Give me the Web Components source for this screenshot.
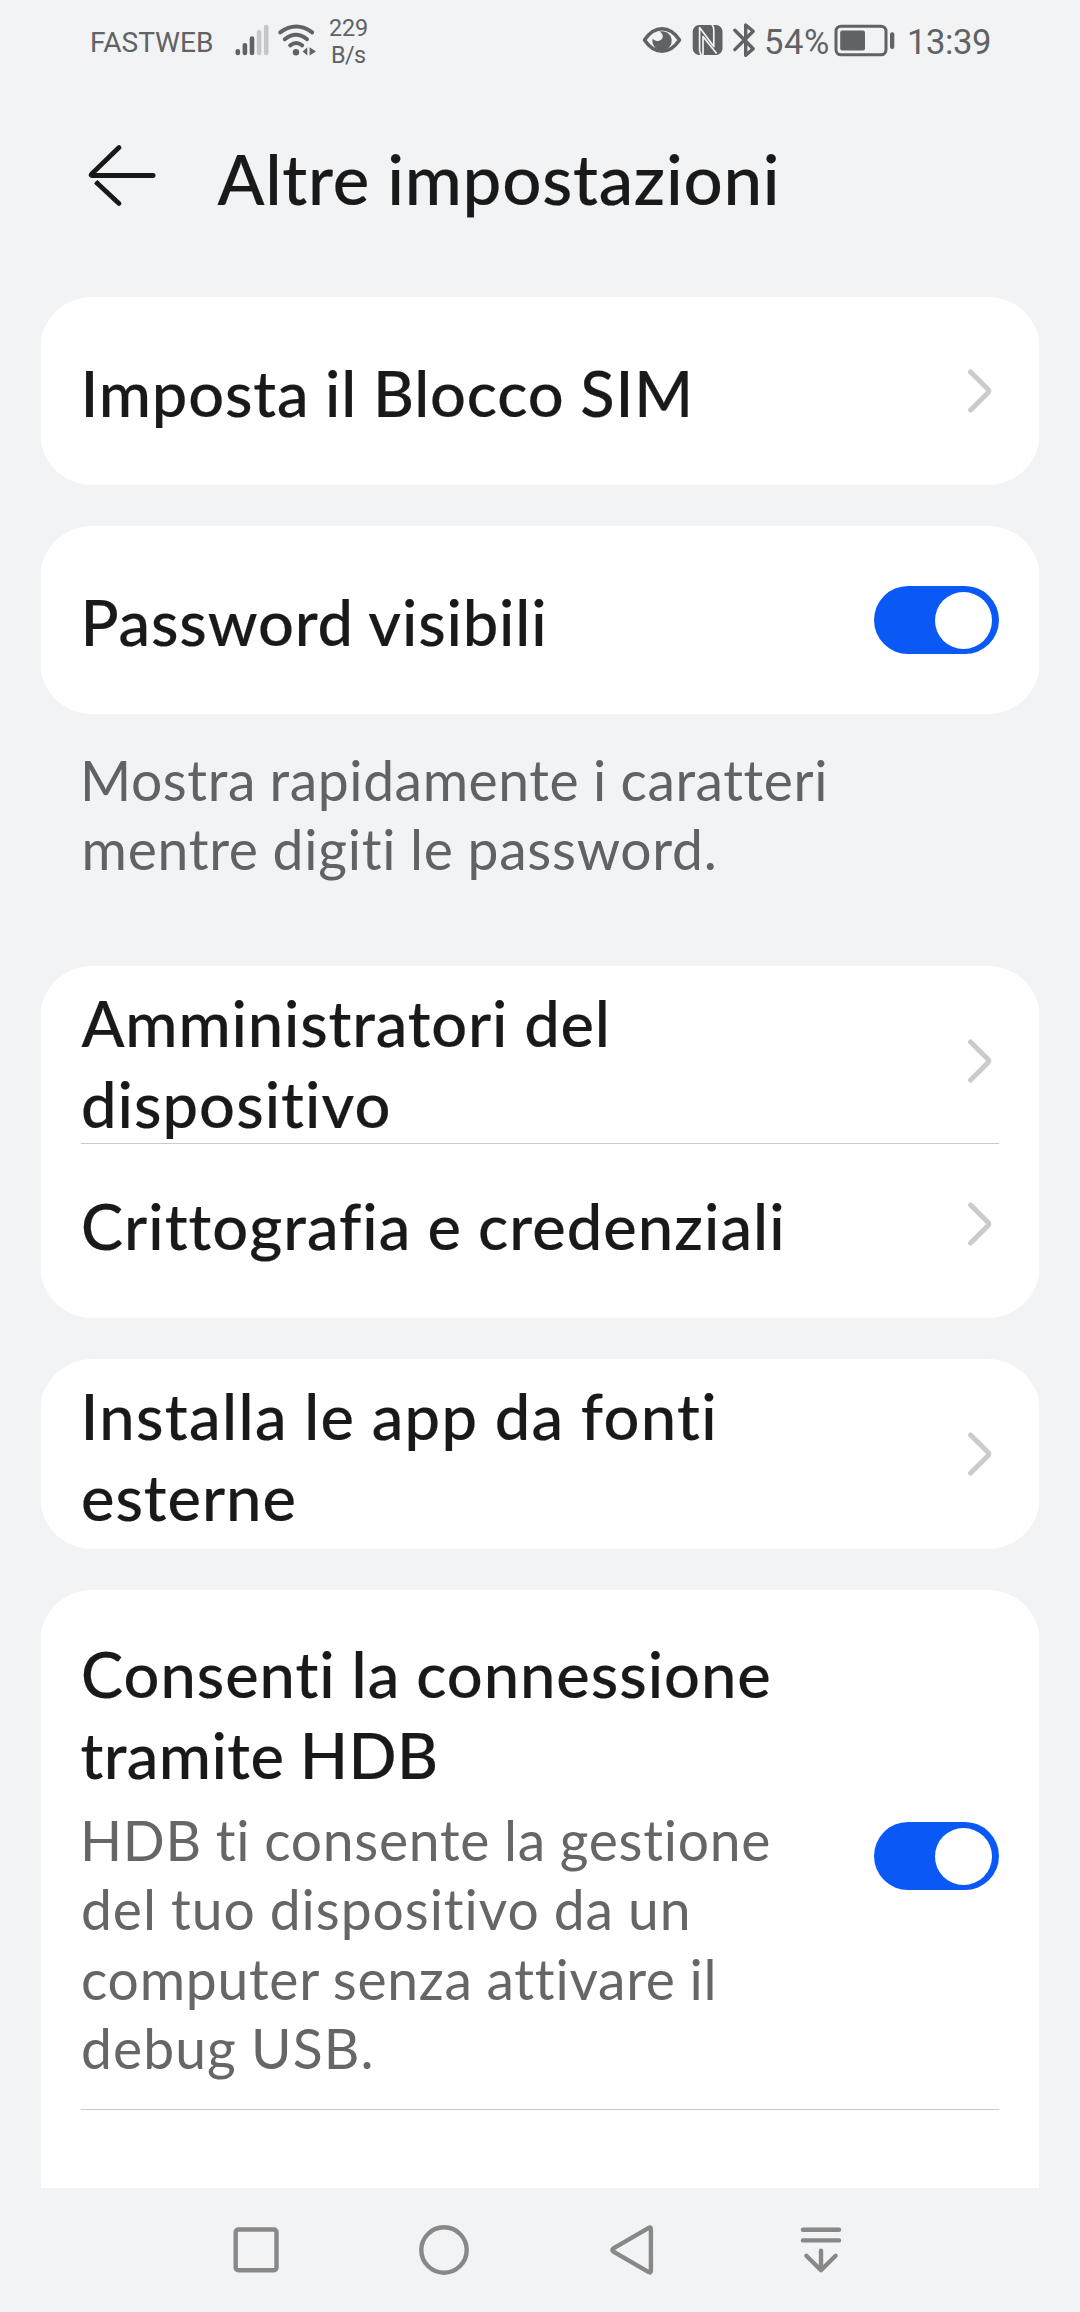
<!DOCTYPE html>
<html lang="it">
<head>
<meta charset="utf-8">
<title>Altre impostazioni</title>
<style>
html,body{margin:0;background:#f1f3f5}
body{width:1080px;height:2312px;overflow:hidden}
</style>
</head>
<body>
<phone-screen>
  <status-bar slot="status"></status-bar>
  <page-header slot="header"><text-line kind="heading" w="559.5">Altre impostazioni</text-line></page-header>

  <setting-card style="height:188px">
    <setting-row style="--h:188px;--tp:55px;--ap:71.5px">
      <text-line kind="title" x="4.5" w="603">Imposta il Blocco SIM</text-line>
      <chevron-icon slot="end"></chevron-icon>
    </setting-row>
  </setting-card>

  <setting-card style="height:188px;margin-top:41px">
    <setting-row style="--h:188px;--tp:55px;--ap:60px">
      <text-line kind="title" x="4.5" w="459.5">Password visibili</text-line>
      <toggle-switch slot="end"></toggle-switch>
    </setting-row>
  </setting-card>

  <card-note>
    <text-line kind="desc" x="4" w="740.5">Mostra rapidamente i caratteri</text-line>
    <text-line kind="desc" x="3.5" w="629.5">mentre digiti le password.</text-line>
  </card-note>

  <setting-card style="height:352px">
    <setting-row divider style="--h:178px;--tp:16px;--ap:72.5px">
      <text-line kind="title" x="0.5" w="524.5">Amministratori del</text-line>
      <text-line kind="title" x="2" w="305.5">dispositivo</text-line>
      <chevron-icon slot="end"></chevron-icon>
    </setting-row>
    <setting-row style="--h:174px;--tp:41px;--ap:57.5px">
      <text-line kind="title" x="2" w="698.5">Crittografia e credenziali</text-line>
      <chevron-icon slot="end"></chevron-icon>
    </setting-row>
  </setting-card>

  <setting-card style="height:190px;margin-top:41px">
    <setting-row style="--h:190px;--tp:16px;--ap:72.5px">
      <text-line kind="title" x="4.5" w="628">Installa le app da fonti</text-line>
      <text-line kind="title" x="2" w="211.5">esterne</text-line>
      <chevron-icon slot="end"></chevron-icon>
    </setting-row>
  </setting-card>

  <setting-card open-end style="height:598px;margin-top:41px">
    <setting-row divider style="--h:520px;--tp:43px;--ap:232px">
      <text-line kind="title" x="2" w="686.5">Consenti la connessione</text-line>
      <text-line kind="title" x="0.5" w="353.5">tramite HDB</text-line>
      <text-line kind="desc" x="4" w="684.5" style="margin-top:11px">HDB ti consente la gestione</text-line>
      <text-line kind="desc" x="2" w="605">del tuo dispositivo da un</text-line>
      <text-line kind="desc" x="2" w="631">computer senza attivare il</text-line>
      <text-line kind="desc" x="2" w="287.5">debug USB.</text-line>
      <toggle-switch slot="end"></toggle-switch>
    </setting-row>
  </setting-card>

  <nav-bar slot="nav"></nav-bar>
</phone-screen>

<script>
const define = (name, html) => customElements.define(name, class extends HTMLElement {
  constructor() {
    super();
    const t = document.createElement('template');
    t.innerHTML = html;
    this.attachShadow({ mode: 'open' }).append(t.content.cloneNode(true));
  }
});

define('phone-screen', `<style>
:host{display:flex;flex-direction:column;width:1080px;height:2312px;background:#f1f3f5;overflow:hidden}
main{display:flex;flex-direction:column;height:1891px;padding:0 40px}
</style><slot name="status"></slot><slot name="header"></slot><main><slot></slot></main><slot name="nav"></slot>`);

define('page-header', `<style>
:host{display:flex;height:217px;align-items:flex-start;box-sizing:border-box;padding-left:86px}
svg{margin:60px 58.5px 0 0;flex:none}
div{padding-top:59px}
</style><svg width="73" height="70" viewBox="86 140 73 70" fill="none" stroke="#191919" stroke-width="4.8" stroke-linecap="round" stroke-linejoin="round"><path d="M119 147.6 91.6 174Q90.3 175.5 92 175.5H153.2M119 203.4 97.3 183.2"/><path d="M97.8 183.7 95.8 181.8" stroke-linecap="butt"/></svg><div><slot></slot></div>`);

define('setting-card', `<style>
:host{display:flex;flex-direction:column;flex:none;background:#fff;border-radius:52px;clip-path:inset(0 1px);box-sizing:border-box}
:host([open-end]){border-radius:52px 52px 0 0}
</style><slot></slot>`);

define('setting-row', `<style>
:host{display:flex;justify-content:space-between;align-items:flex-start;height:var(--h);margin:0 41px;box-sizing:border-box;border-bottom:0 solid #c9c9c9}
:host([divider]){border-bottom-width:1px}
.copy{display:flex;flex-direction:column;padding-top:var(--tp)}
.end{display:flex;padding-top:var(--ap)}
</style><div class="copy"><slot></slot></div><div class="end"><slot name="end"></slot></div>`);

define('card-note', `<style>
:host{display:flex;flex-direction:column;flex:none;height:252px;box-sizing:border-box;padding:32px 41px 0;--desc:#616263}
</style><slot></slot>`);

define('chevron-icon', `<style>:host{display:block;width:33px;height:44px}svg{display:block}</style>
<svg width="33" height="44" viewBox="966 0 33 44" fill="none" stroke="#cbcbcb" stroke-width="5" stroke-linecap="round" stroke-linejoin="round"><path d="M970.6 2.9 988.2 20.5Q989.4 22 988.2 23.5L970.6 41.1"/></svg>`);

define('toggle-switch', `<style>
:host{display:flex;justify-content:flex-end;align-items:center;width:125px;height:68px;border-radius:34px;background:#0a59f7;box-sizing:border-box;padding-right:7px;margin-right:-.4px}
i{display:block;width:57px;height:57px;border-radius:50%;background:#fff}
</style><i></i>`);

define('status-bar', `<style>
:host{display:flex;justify-content:space-between;height:80px;flex:none;box-sizing:border-box;padding:0 90px 0 92px}
div{display:flex}
svg{display:block;flex:none}
.rate{flex-direction:column;padding-top:14.5px}
</style>
<div>
<text-line kind="carrier" w="120" style="margin-top:22.5px">FASTWEB</text-line>
<svg style="margin-left:22px" width="38" height="80" viewBox="234 0 38 80" fill="none" stroke="#616263" stroke-width="4.6" stroke-linecap="round"><path d="M237.8 51.3V53M244.9 45.3V53M252 38.5V53"/><path stroke="#c5c7c8" d="M259.1 32.3V53M266.2 27V53"/></svg>
<svg style="margin-left:4px" width="42" height="80" viewBox="276 0 42 80" fill="none" stroke="#616263" stroke-width="4" stroke-linecap="round"><path d="M280.2 32.4Q296.2 20.6 312.2 32.4M284.8 39.2Q296 30.4 307 39.2M290.2 45.3Q296.2 40.8 302.2 45.3"/><circle cx="296" cy="52.2" r="3.2" fill="#616263" stroke="none"/><path fill="#616263" stroke="none" d="M302.6 51.6 307.3 47.3V55.4ZM309.6 47.3 316 51.4 309.6 55.4Z"/></svg>
<div class="rate" style="margin-left:12px"><text-line kind="rate" w="37">229</text-line><text-line kind="rate" x="2" w="33">B/s</text-line></div>
</div>
<div>
<svg width="42" height="80" viewBox="641 0 42 80"><path d="M644.5 40Q652 28.8 662 28.8T679.5 40Q672 51.2 662 51.2T644.5 40Z" fill="none" stroke="#616263" stroke-width="3.5" stroke-linejoin="round"/><path d="M659.5 31.5A9.6 9.6 0 1 1 652.7 38.5C655 42.5 662.5 41.5 662.8 36.5C662.8 34.3 661.5 32.5 659.5 31.5Z" fill="#616263"/></svg>
<svg style="margin-left:9px" width="32" height="80" viewBox="692 0 32 80"><rect x="692.7" y="25" width="29.8" height="30" rx="6.5" fill="#616263"/><path fill="none" stroke="#f1f3f5" stroke-width="1.7" stroke-linejoin="round" d="M701.4 55.5 699.6 51V27.5L713.8 46.5V30Q713.8 26.5 711.8 24.5M703 55.5V36.5L716.6 53.5"/></svg>
<svg style="margin-left:8px" width="26" height="80" viewBox="732 0 26 80" fill="none" stroke="#616263" stroke-width="3.4" stroke-linecap="round" stroke-linejoin="round"><path d="M734.8 30.2 753.2 48.8 745.7 55.3V25L753.2 31.2 734.8 49.6"/></svg>
<text-line kind="clock" w="62" style="margin:22px 0 0 8px">54%</text-line>
<svg style="margin-left:5px" width="64" height="80" viewBox="833 0 64 80"><rect x="836" y="26.2" width="50" height="28.6" rx="5" fill="none" stroke="#616263" stroke-width="3"/><rect x="840.2" y="30.5" width="24.8" height="20" rx="2" fill="#616263"/><rect x="890" y="32.2" width="4.3" height="16.8" rx="2" fill="#616263"/></svg>
<text-line kind="clock" w="81" style="margin:22px 0 0 12px">13:39</text-line>
</div>`);

define('nav-bar', `<style>
:host{display:flex;height:124px;flex:none;box-sizing:border-box;padding:35px 0 0 231px;gap:136px}
svg{display:block;flex:none;fill:none;stroke:#888;stroke-width:4.4;stroke-linecap:round;stroke-linejoin:round}
svg:last-of-type{margin-left:6px}
</style>
<svg width="50" height="54" viewBox="231 2223 50 54"><rect x="235.7" y="2229.5" width="40.8" height="40.8" rx="2.5"/></svg>
<svg width="54" height="54" viewBox="417 2223 54 54"><circle cx="444" cy="2250" r="22.7"/></svg>
<svg width="48" height="54" viewBox="607 2223 48 54"><path d="M650.9 2229.3V2270.7Q650.9 2273.6 648.3 2271.8L613.4 2251.6Q611.3 2250 613.4 2248.4L648.3 2228.2Q650.9 2226.4 650.9 2229.3Z"/></svg>
<svg width="48" height="54" viewBox="797 2223 48 54"><path d="M802.9 2229.8H839M802.9 2240.4H839M821 2250.8V2270M806.4 2255.8 821 2270.2 835.6 2255.8"/></svg>`);

/* One line of copy whose tracking is adjusted so its ink spans exactly w pixels, starting x pixels in. */
customElements.define('text-line', class extends HTMLElement {
  constructor() {
    super();
    this.attachShadow({ mode: 'open' }).innerHTML = `<style>
:host{display:block;white-space:nowrap;font-variant-ligatures:none;font-family:Lato,sans-serif}
span{display:inline-block}
:host([kind=heading]){font-size:69px;font-weight:500;line-height:80px;color:#191919;-webkit-text-stroke:.2px #191919}
:host([kind=title]){font-size:63.2px;font-weight:500;line-height:81px;color:#191919;-webkit-text-stroke:.2px #191919}
:host([kind=desc]){font-size:55.2px;line-height:69.3px;color:var(--desc,#666)}
:host([kind=carrier]){font-family:Roboto,sans-serif;font-size:28.1px;line-height:40px;color:#616263}
:host([kind=rate]){font-family:Roboto,sans-serif;font-size:23.4px;line-height:27px;color:#616263}
:host([kind=clock]){font-family:Roboto,sans-serif;font-size:34.6px;line-height:40px;color:#616263}
</style><span><slot></slot></span>`;
  }
  connectedCallback() {
    const text = this.textContent.trim(), cs = getComputedStyle(this);
    const c = document.createElement('canvas').getContext('2d');
    c.font = `${cs.fontWeight} ${cs.fontSize} ${cs.fontFamily}`;
    c.letterSpacing = '0.01px';
    const m = c.measureText(text);
    const word = /title|heading|desc/.test(this.getAttribute('kind')) ? -1 : 0;
    const spaces = text.split(' ').length - 1;
    const ink = m.actualBoundingBoxRight + m.actualBoundingBoxLeft;
    const target = +this.getAttribute('w'), x = +this.getAttribute('x') || 0;
    const span = this.shadowRoot.querySelector('span');
    span.style.letterSpacing = (target - ink - word * spaces) / (text.length - 1) + 'px';
    span.style.wordSpacing = word + 'px';
    span.style.marginLeft = x + m.actualBoundingBoxLeft + 'px';
    this.style.width = target + x + 'px';
  }
});
</script>
</body>
</html>
